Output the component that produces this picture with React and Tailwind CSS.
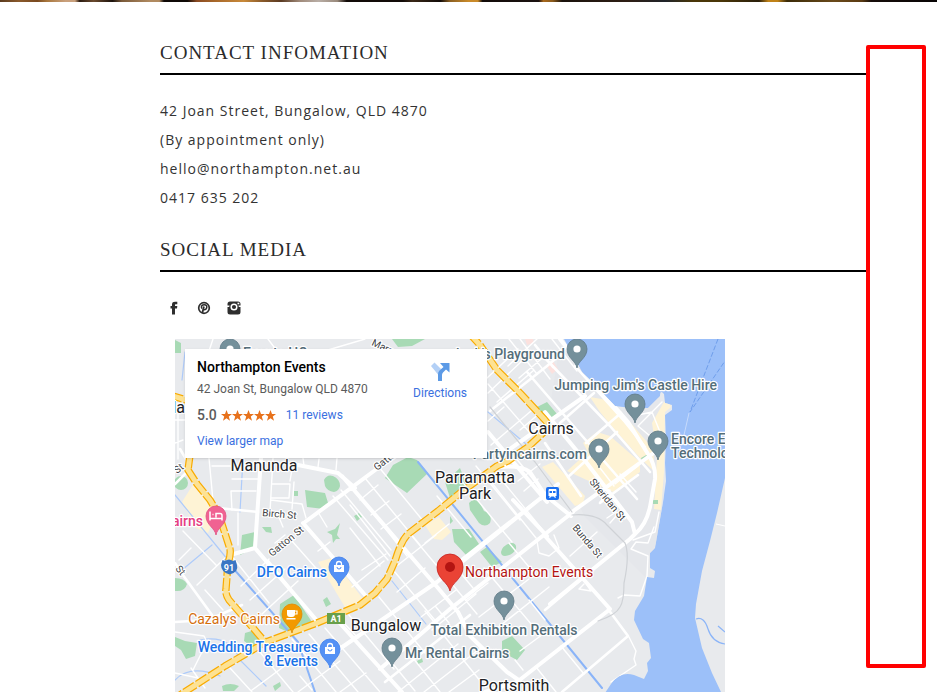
const contactLines = [
    '42 Joan Street, Bungalow, QLD 4870',
    '(By appointment only)',
    'hello@northampton.net.au',
    '0417 635 202',
];

const parks = [
    'M175 340l6 3v10h-6z',
    'M392 339h33l-13 7-14 1z',
    'M181 476a7 7 0 1 1 0 14 7 7 0 0 1 0-14z',
    'M324 480q3-6 9-4 7 3 7 10-1 5-6 6-7-1-9-6z',
    'M305 490l20 3 4 13-5 3-17-2z',
    'M385 478l8-13 15-8 9 3 11 13-21 20z',
    'M445 482l15-14 4 10 3 10-17 10z',
    'M469 503q5-6 11 0l4 8q9 3 6 12-5 5-11 0l-9-13z',
    'M537 407l10-5 10 12-9 7z',
    'M242 535l13-3-2 17-13 6z',
    'M262 527l9 0 1 6-6-1z',
    'M327 532l8-3 5-6-3 12 3 4-4 0-3 4-1-8z',
    'M354 516l5-3 3 4-5 4z',
    'M294 491h4v5h-4z',
    'M280 604l14-9 18 27-24 10-9-4z',
    'M323 600l4-3 4 7-5 3z',
    'M175 637l10 4 12 2-2 13-9 3-5-9-6-4z',
    'M245 633l10-3 7 12-11 4-7-5z',
    'M222 686q8-4 17 0l-5 5h-11z',
    'M273 686l7-4 1 4-6 5z',
    'M175 578q9 0 12 6-2 8-12 7z',
    'M452 529h17l12 18-14 9-13-14z',
    'M480 552l7-5 15 15-10 5z',
    'M501 552q1-6 9-9 7-1 6 6-3 6-11 7-4 0-4-4z',
    'M502 641l10-5 13 14-8 10-15-8z',
    'M641 458l7-4-1 5-5 2z',
    'M653 500h5v4h-5z',
    'M417 661l5-3 1 4-5 2z',
    'M450 516l3 5-3 3z',
];

const commercial = [
    'M182 502l12-19 16 22 6 10-8 18-12-5z',
    'M425 525l14-8 12 15-9 8-8-1z',
    'M318 562l14-4 31 41-17 10z',
    'M590 397l17 3 10 9 13 13 23 27 2 23-15-14-25-28-15-18z',
    'M567 471l21-19-5-9 14-11 13 4 30 26v10l-27 20z',
    'M542 467l11-5 32 34-2 7-8 3z',
    'M664 402q9 2 6 6l-5 4-1 60-3 38-7-1 3-53-5-33z',
];

const minorRoads = [
    // west side
    'M213 339l-4 12M268 339l9 12M328 350l37-11M178 403v56M175 420h10M175 443l8-3',
    'M273 458l-3 54M292 469l-2 12M303 458l1 8M319 459l-1 8M337 458l-1 12',
    'M272 484h18l-1 14h-18M294 482l-2 27M271 500l31 4 4 14M341 490l50 60M333 496l55 64',
    'M258 479h-26M256 491h-25l1 19M252 466h-40M209 458l4 43',
    'M238 513v32M278 515l5 12M285 535l-10 8M318 512l9 15M330 542l-12 9M343 558l-11 9',
    'M268 560l43 55M292 541l30 34M231 555l38 48M241 586l28-27M250 600l35-31M262 614l36-33',
    'M183 531l33 34M179 560l12-12M197 585l28-27',
    'M205 590l18 20M175 632l29 4 8 16M208 640l-15 30M175 673l23 5M191 668l14 20',
    // south west
    'M230 668l22 24M259 651l34 41M292 639l44 53M309 634l49 58M325 628l55 64',
    'M252 690l42-31M298 692l42-31M340 692l26-19M300 676l12 14M342 621l16 17',
    // parramatta park and bungalow
    'M365 478l55 67M378 466l46 56M357 493l50 63M350 505l40 51M437 496l34 41M460 479l52 63M476 466l44 54',
    'M360 500l18-15M371 515l18-14M381 529l20-15M350 528l30 38M362 570l24-16M352 587l32-26',
    'M412 536l65 78M394 571l55 66M379 597l46 56M349 615l45 54',
    'M398 565l38-30M397 592l28-24M421 617l35-27M432 630l44-36M425 543l24-19',
    'M436 607l13 16M425 611l15 18M459 571l14 17M484 568l53 63M509 543l20 24M529 600l16 20',
    'M466 600l22-17M479 617l50-38M491 633l58-46M398 692l60-48M424 692l58-45M449 692l30-22',
    'M405 648l35 44M437 627l44 55M389 659l26 32',
    'M536 667l20 25M561 646l23 28M515 660l8 10M520 651l30-22',
    // north of parramatta park
    'M487 378l31-29M488 393l36-34M497 402l37-32M488 421l16-14M520 430l21-18M488 384l43 50M491 445l40-34',
    'M509 339l28 35M520 339l30 40M552 339l25 32M508 366l29-27M519 378l28-24',
    'M510 451l42 51M500 478l46 56M488 478l48 60M524 491l14-12M541 500l17-15M518 481l22-17',
    // waterfront
    'M633 540l22-8 4-20M631 549l5-7 12 1 6-16M631 549l17 7-1 20-7 20-16-1-6 3M662 402l-10 10-14 14 12 10 8 2M652 412l-14 3M652 412l8 20',
    'M629 637l7 14-2 8 2 6-25 17M570 556l27-24M584 584l-5 5 12 2-8-12M537 541l2 12 10 3 10-8-5-13',
    'M607 518l9-6M610 523l7-8M610 490l-10 12M600 468l14 18M615 484l23-18M620 474l16 18',
];

const midRoads = [
    'M175 563l5 8 32 44M175 622l33-2 34-15M218 508l40 4M175 484l12-12M186 459l-6-10',
    'M490 411l57-45 14-12M560 423l34-30M568 477l49-45M600 503l38-28M586 443l35-30',
    'M543 356l67 70 40 46M527 372l50 58 60 69M545 443l36 53M575 366l50 56 20 25M535 345l18 22',
    'M608 609l20 27-66 56M462 559l73-57M545 610l37-31M385 682l85-67',
];

const mainRoads = [
    'M261 458l-6 90-25 7M255 548l63 74M337 620l25 28 40 44',
    'M305 522l73-54 30-20M303 523l39 45 23 27',
    'M298 465l40 8 17 15M342 476l96 112 20 24 12 24 37 36 13 9',
    'M335 652l102-70 83-67 38-31M380 669l70-60 123-97M572 512l83-60',
    'M517 682l92-72M485 692l32-10',
    'M500 467q20-2 30 5l15 23 26 21M488 432l59 70M545 536l65 73M547 536l-34-36',
    'M510 449l75-53M586 462l46 60 3 12M545 412l41 50',
    'M560 339l34 44 34 39 20 32q8 12 7 25l-5 28q-4 18-15 27l-5 5-48 39-32 26',
];

const highway = 'M470 334l10 11 17 25 23 23 25 27q6 6-2 13l-15 14-20 14-11 5-37 27-22 18-30 23q-7 7-13 27l-8 18-12 14-15 12-43 18-51 19-41 24-45 29';
const highwayWest = 'M170 395l16 5M190 455l-2 15 9 14 13 16 9 15 11 34q1 6-2 14l-2 26q-1 5 3 11l13 15 23 27';
const land = 'M175 339H564l18 33 15 15 18 19 16 2 17 0 12-12q0-7 4-2l1 9 7 2v5l-7 5 1 26-1 22 1 18-3 21-8 46-5 5v15l5 3-1 7-7-1-3 19-9 15-1 9 9 19 6 4 2 15-4 5 1 8-4 8-10-4q-14-4-23 9l-8 12H175z';

const Pin = ({ x, y, color = '#74909b', stroke = '#5f7a86', children }) => (
    <g transform={`translate(${x} ${y})`}>
        <path d="M0 19c-1-7-10-10-10-19a10 10 0 0 1 20 0c0 9-9 12-10 19z" fill={color} stroke={stroke} strokeWidth="0.8" />
        {children || <circle r="3.6" fill="#fff" />}
    </g>
);

const Bag = () => (
    <g>
        <path d="M-5-2h10v7h-10z" fill="#fff" />
        <path d="M-2.5-2v-1a2.5 2.5 0 0 1 5 0v1" fill="none" stroke="#fff" strokeWidth="1.3" />
        <path d="M-2 0a2 2 0 0 0 4 0" fill="none" stroke="#4d8df5" strokeWidth="1" />
    </g>
);

const Label = ({ x, y, size = 14, color = '#546e7a', end, middle, rotate = 0, weight = 500, children }) => (
    <text
        transform={`translate(${x} ${y}) rotate(${rotate})`}
        textAnchor={end ? 'end' : middle ? 'middle' : 'start'}
        fontSize={size}
        fontWeight={weight}
        fill={color}
        stroke="#fff"
        strokeWidth="2.4"
        strokeLinejoin="round"
        paintOrder="stroke"
    >
        {children}
    </text>
);

const MapDrawing = () => (
    <svg className="block w-full font-['Roboto',sans-serif]" viewBox="175 339 550 353" role="img" aria-label="Map">
        <defs>
            <clipPath id="land">
                <path d={land} />
            </clipPath>
        </defs>
        <rect x="175" y="339" width="550" height="353" fill="#9cc0f9" />
        <path d={land} fill="#e8eaed" />
        <path d="M725 478l-8 35-7 28-8 30-6 33-1 14 7 30 10 25 9 19h4z" fill="#e8eaed" />
        <path d="M696 619q8-3 12 10t17 15M718 626l7 6" fill="none" stroke="#8ab4f8" strokeWidth="1.2" />
        <path d="M716 524l9 2" stroke="#fff" />
        <path d="M718 339l-28 73 35-51" fill="none" stroke="#6f9eeb" strokeDasharray="5 2" />
        <path d="M689 413l-5 22" stroke="#c6dafc" />
        <g clipPath="url(#land)">
            <path d="M560 345l60 66 40-14 5 120-20 60-60-60-40-80z" fill="#e2e4e9" opacity="0.6" />
            <path d={commercial.join('')} fill="#fef3d5" />
            <path d={parks.join('')} fill="#a8dab5" />
            <path d="M546 365l7-4 5 8-6 5zM525 339l8 0 1 4-7 2z" fill="#fce1de" />
            <g fill="none" strokeLinejoin="round" strokeLinecap="round">
                <path d="M185 352l-3 28M243 458l-3 54M175 495l53 65M182 570l30-25M488 412l38 32M392 581l34 43M220 676q-30-12-45 4M200 640q30-6 40 20l26 26" stroke="#aecbfa" strokeWidth="1.2" />
                <path d="M418 462l184 226M225 559l73 83 17 50" stroke="#8ab4f8" strokeWidth="2" />
                <path d={minorRoads.join('')} stroke="#fff" strokeWidth="1.4" />
                <path d={midRoads.join('')} stroke="#fff" strokeWidth="2.6" />
                <path d={mainRoads.join('')} stroke="#fff" strokeWidth="4" />
                <path d="M572 515q25-2 35 10l18 18q5 12-1 40 0 18-4 24-4 8-22 14M490 407l45 55 37 50" stroke="#cfd2d6" strokeWidth="1.2" />
                <path d={highway + highwayWest} stroke="#f9ab00" strokeWidth="7.4" strokeDasharray="13 2" strokeLinecap="butt" />
                <path d={highway + highwayWest} stroke="#fde293" strokeWidth="5" />
            </g>
        </g>

        <g>
            <Label x={371} y={345} size={10} color="#3c4043" rotate={25} weight={400}>Marn St</Label>
            <Label x={377} y={471} size={10} color="#3c4043" rotate={-38} weight={400}>Gatton St</Label>
            <Label x={177} y={474} size={10} color="#3c4043" rotate={-38} weight={400}>St</Label>
            <Label x={175} y={569} size={10} color="#3c4043" rotate={50} weight={400}>St</Label>
            <Label x={262} y={516} size={10} color="#3c4043" rotate={5} weight={400}>Birch St</Label>
            <Label x={272} y={557} size={10} color="#3c4043" rotate={-39} weight={400}>Gatton St</Label>
            <Label x={589} y={482} size={10} color="#3c4043" rotate={51} weight={400}>Sheridan St</Label>
            <Label x={572} y={528} size={10} color="#3c4043" rotate={50} weight={400}>Bunda St</Label>
        </g>

        <Pin x={230} y={349} />
        <Label x={243} y={358}>Events HQ</Label>
        <Pin x={577} y={349} />
        <Label x={565} y={359} end>Jack&#39;s Playground</Label>
        <Label x={717} y={390} end>Jumping Jim&#39;s Castle Hire</Label>
        <Pin x={635} y={404} />
        <Pin x={658} y={441} />
        <Label x={671} y={444}>Encore Events</Label>
        <Label x={671} y={458}>Technology</Label>
        <Pin x={599} y={449} />
        <Label x={587} y={459} end>Partyincairns.com</Label>
        <Pin x={504} y={601} />
        <Label x={504} y={635} middle>Total Exhibition Rentals</Label>
        <Pin x={392} y={648} />
        <Label x={405} y={658}>Mr Rental Cairns</Label>

        <Label x={185} y={413} size={16} color="#202124" end weight={400}>la</Label>
        <Label x={264} y={471} size={16} color="#202124" middle weight={400}>Manunda</Label>
        <Label x={475} y={483} size={16} color="#202124" middle weight={400}>Parramatta</Label>
        <Label x={475} y={499} size={16} color="#202124" middle weight={400}>Park</Label>
        <Label x={551} y={434} size={16} color="#202124" middle weight={400}>Cairns</Label>
        <Label x={386} y={631} size={16} color="#202124" middle weight={400}>Bungalow</Label>
        <Label x={514} y={691} size={16} color="#202124" middle weight={400}>Portsmith</Label>

        <Pin x={216} y={516} color="#f06292" stroke="#e04f82">
            <path d="M-6-4.5v9M-5.5 2.5h11.5v2M6 2.5v-3q0-2-2-2h-4v4M-3.5-1.5h1" fill="none" stroke="#fff" strokeWidth="1.5" />
        </Pin>
        <Label x={203} y={526} color="#e53e82" end>Cairns</Label>
        <Pin x={339} y={567} color="#5491f5" stroke="#3d7de8"><Bag /></Pin>
        <Label x={327} y={577} color="#1a73e8" end>DFO Cairns</Label>
        <Pin x={330} y={649} color="#5491f5" stroke="#3d7de8"><Bag /></Pin>
        <Label x={318} y={652} color="#1a73e8" end>Wedding Treasures</Label>
        <Label x={318} y={666} color="#1a73e8" end>&amp; Events</Label>
        <Pin x={292} y={614} color="#f29900" stroke="#e08a00">
            <path d="M-5-4h8v4q0 3-3 3h-2q-3 0-3-3zM-5.500 4h9v1.500h-9z" fill="#fff" />
            <path d="M3-3h2v3h-2" fill="none" stroke="#fff" strokeWidth="1.2" />
        </Pin>
        <Label x={280} y={624} color="#d56e0c" end weight={400}>Cazalys Cairns</Label>

        <path d="M222.500 560l2.500 1q4-3 8 0l2.500-1 1.500 5q2 7-7.500 9.500Q221 572 221 565z" fill="#3a76c4" />
        <text x="229" y="571" textAnchor="middle" fontSize="9" fontWeight="700" fill="#fff">91</text>
        <rect x="327" y="613" width="18" height="11" fill="#689f4a" />
        <text x="336" y="622" textAnchor="middle" fontSize="9" fontWeight="700" fill="#fff">A1</text>
        <rect x="546" y="487" width="13" height="13" rx="2" fill="#1a6ff0" />
        <path d="M549 489.500h7v6.500h-7zM549.500 498l1.500-2M555.500 498l-1.500-2" fill="#fff" stroke="#fff" />
        <path d="M549.500 491h2.500v2h-2.500zM553 491h2.500v2h-2.500z" fill="#1a6ff0" />

        <path d="M450 591c-2-9-13-12-13-24a13 13 0 0 1 26 0c0 12-11 15-13 24z" fill="#ea4335" stroke="#c5221f" strokeWidth="0.8" />
        <circle cx="450" cy="567" r="5" fill="#b31412" />
        <Label x={465} y={577} color="#b31412" weight={400}>Northampton Events</Label>
    </svg>
);

const Stars = () => (
    <svg className="ml-1 h-[11px] w-[55px]" viewBox="0 0 55 11" fill="#e7711b" aria-label="5 stars">
        {[0, 11, 22, 33, 44].map((x) => (
            <path key={x} transform={`translate(${x} 0)`} d="M5.500 0l1.500 3.900 4 .1-3.200 2.500 1.200 4.200-3.500-2.400L2 10.700l1.200-4.200L0 4l4-.1z" />
        ))}
    </svg>
);

const PlaceCard = () => (
    <div className="absolute top-[10px] left-[10px] flex h-[109px] w-[302px] justify-between bg-white pt-[10px] pr-5 pl-3 font-['Roboto',sans-serif] text-[12px] leading-4 shadow">
        <div>
            <h2 className="text-[14px] font-medium text-black">Northampton Events</h2>
            <p className="mt-[6px] text-[#5b5b5b]">42 Joan St, Bungalow QLD 4870</p>
            <div className="mt-[10px] flex items-center">
                <span className="text-[14px] font-medium text-[#5b5b5b]">5.0</span>
                <Stars />
                <a href="#reviews" className="ml-[10px] text-[#3a6fe0]">11 reviews</a>
            </div>
            <a href="#map" className="mt-[10px] block text-[#3a6fe0]">View larger map</a>
        </div>
        <a href="#directions" className="flex flex-col items-center self-start pt-[3px] text-[#3a6fe0]">
            <svg className="h-[19px] w-[19px]" viewBox="0 0 19 19" aria-hidden="true">
                <path d="M0 4l3.500-3.500 6.500 6.500-3 5.500z" fill="#b3d0f6" />
                <path d="M7 19v-7q0-2 1.500-3.500l4-3.500L9 1h9.500v9.500L15 7.500l-3 3q-1 1-1 2.500v6z" fill="#5c9ae6" />
            </svg>
            <span className="mt-1">Directions</span>
        </a>
    </div>
);

const SectionTitle = ({ children }) => (
    <h1 className="border-b-2 border-black pb-2 font-['Liberation_Serif',serif] text-[19px] leading-6 tracking-[1px] text-[#2b2b2b]">
        {children}
    </h1>
);

const SocialLinks = () => (
    <nav className="mt-[22px] flex gap-0.5 text-[#2e2e2e]">
        <a href="#facebook" aria-label="Facebook" className="flex h-7 w-7 items-center justify-center">
            <svg className="h-[14px] w-[14px]" viewBox="0 0 14 14" fill="currentColor">
                <path d="M5 13.500V7.500H3.500V5H5V3.600C5 1.500 6.200.8 8 .8h2.300v2.400H8.900c-.7 0-.9.3-.9.8v1h2.300L10 7.500H8v6z" />
            </svg>
        </a>
        <a href="#pinterest" aria-label="Pinterest" className="flex h-7 w-7 items-center justify-center">
            <svg className="h-[14px] w-[14px]" viewBox="0 0 14 14" fill="none" stroke="currentColor">
                <circle cx="7" cy="7" r="5.300" strokeWidth="1.700" />
                <path d="M5.300 12.300l1.600-6.800" strokeWidth="1.800" />
                <path d="M4.900 7.600C3.500 5.200 5.200 3.700 7.200 3.700c2.200 0 3 1.500 2.500 3.100-.5 2-2.400 2.400-3.200 1.300" strokeWidth="1.500" />
            </svg>
        </a>
        <a href="#instagram" aria-label="Instagram" className="flex h-7 w-7 items-center justify-center">
            <svg className="h-[14px] w-[14px]" viewBox="0 0 14 14">
                <path d="M3 .5h8a2.500 2.500 0 0 1 2.500 2.500v1.500H.5V3A2.500 2.500 0 0 1 3 .5zM.5 6h13v5a2.500 2.500 0 0 1-2.500 2.500H3A2.500 2.500 0 0 1 .5 11z" fill="currentColor" />
                <circle cx="7" cy="6" r="4.800" fill="currentColor" />
                <circle cx="7" cy="6" r="2.800" fill="none" stroke="#fff" strokeWidth="1.500" />
                <path d="M10.500 1.700h1.800v1.600h-1.800z" fill="#fff" />
            </svg>
        </a>
    </nav>
);

export default function App() {
    return (
        <div className="relative bg-white">
            <div className="h-0.5 bg-[linear-gradient(90deg,#5a3a1e_0%,#8a5a2c_2%,#7a4a20_4%,#a8763c_5%,#c9a07c_7%,#c9a07c_8%,#2a1a10_8.5%,#6b4a2e_10%,#1b120c_12%,#7a5a3a_13%,#b08a60_16%,#b08a60_17%,#0f0906_17.5%,#0f0906_20%,#8a4a22_21%,#a8682a_23%,#c98a3a_26%,#8a5a2a_28%,#5a3a22_30%,#a08a7a_32%,#b9aea6_34%,#9a8a7c_36%,#120b08_37%,#120b08_43%,#3a2817_44%,#120b08_47%,#8a5f22_48%,#c98a2a_50%,#c98a2a_51%,#120b08_51.5%,#1b1210_57.5%,#a8681c_58%,#8a5a1c_59%,#1a120c_60%,#2e1e14_67%,#20242a_71%,#4a3608_74%,#4a3608_77%,#2a1f0a_81%,#c08218_82%,#c08218_83%,#3a2a08_84%,#6a4a1a_89%,#5a3a12_92%,#160d0a_93%,#080404_100%)]" />

            <main className="pt-[39px] pr-[71px] pl-40">
                <SectionTitle>CONTACT INFOMATION</SectionTitle>
                <address className="mt-[21px] font-['Open_Sans',sans-serif] text-[14px] leading-[29px] tracking-[1px] text-[#333] not-italic">
                    {contactLines.map((line) => (
                        <p key={line}>{line}</p>
                    ))}
                </address>

                <div className="mt-[26px]">
                    <SectionTitle>SOCIAL MEDIA</SectionTitle>
                </div>
                <SocialLinks />

                <div className="relative mt-[17px] ml-[15px] max-w-[550px] overflow-hidden">
                    <MapDrawing />
                    <PlaceCard />
                </div>
            </main>

            <div className="absolute top-[45px] right-[11px] bottom-6 w-[60px] rounded-xs border-4 border-[#ff0000] bg-white" />
        </div>
    );
}
